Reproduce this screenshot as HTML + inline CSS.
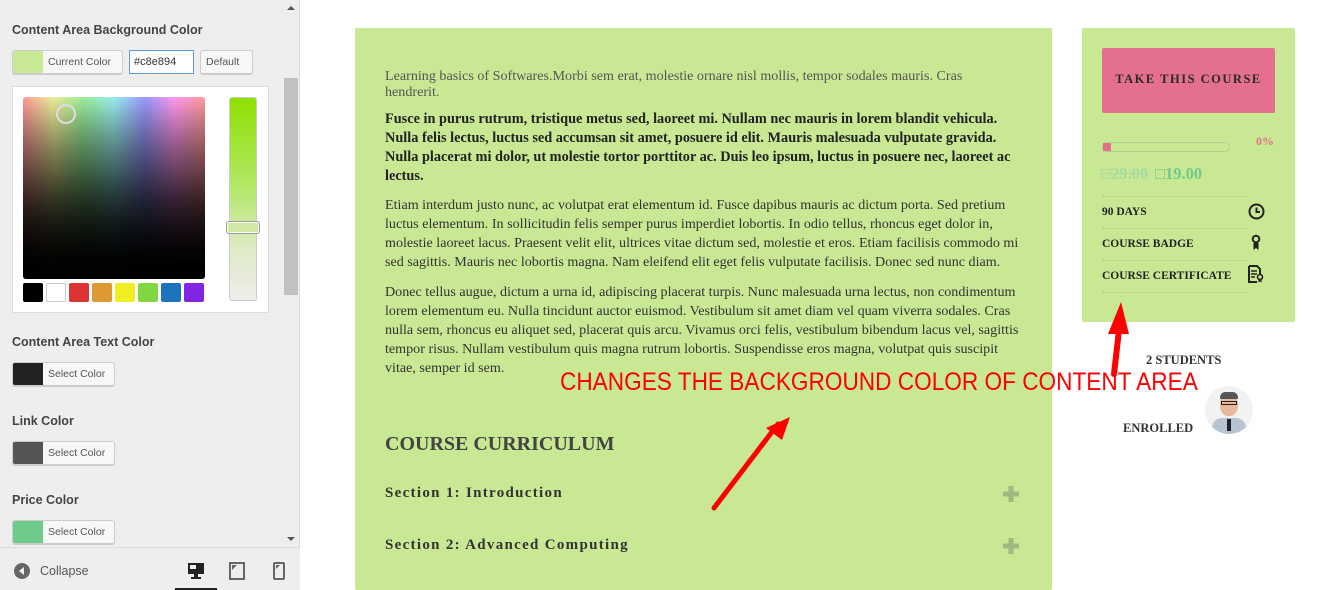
<!DOCTYPE html>
<html><head><meta charset="utf-8"><style>
*{margin:0;padding:0;box-sizing:border-box}
body{width:1344px;height:590px;overflow:hidden;background:#fff;font-family:"Liberation Sans",sans-serif;position:relative}
.side{position:absolute;left:0;top:0;width:300px;height:590px;background:#eeeeee;border-right:1px solid #ddd}
.lbl{position:absolute;left:12px;font-size:12.5px;font-weight:bold;color:#444}
.btn{position:absolute;left:12px;height:24px;border:1px solid #ccc;border-radius:3px;background:#f7f7f7;display:flex;font-size:10.5px;color:#555;overflow:hidden;box-shadow:0 1px 0 #ccc;white-space:nowrap}
.btn .sw{width:30px;height:100%;flex:none}
.btn span{padding:0 5px;line-height:22px}
.abs{position:absolute}
.s{font-family:"Liberation Serif",serif}
.ln{position:absolute;left:385px;white-space:nowrap;font-family:"Liberation Serif",serif;font-size:14.1px;color:#333}
.b{font-weight:bold;color:#222;font-size:14.3px}
.row{position:absolute;left:1102px;width:146px;font-family:"Liberation Serif",serif;font-weight:bold;font-size:11.5px;color:#222;border-top:1px dotted #a9c98a;height:32px;line-height:30px}
</style></head><body>
<div class="side">
  <div class="lbl" style="top:23px">Content Area Background Color</div>
  <div class="btn" style="top:50px;width:111px"><div class="sw" style="background:#c8e894"></div><span>Current Color</span></div>
  <div class="abs" style="left:129px;top:50px;width:65px;height:24px;border:1px solid #5b9dd9;background:#fff;font-size:11px;color:#333;line-height:22px;padding-left:4px">#c8e894</div>
  <div class="btn" style="left:200px;top:50px;width:53px"><span>Default</span></div>
  <div class="abs" style="left:12px;top:86px;width:257px;height:227px;background:#fff;border:1px solid #ddd"></div>
  <div class="abs" style="left:23px;top:97px;width:182px;height:182px;border-radius:3px;background:linear-gradient(to bottom,rgba(0,0,0,0),#000),linear-gradient(to right,#f99,#ee9,#9e9,#9ee,#99f,#f9e,#f99)"></div>
  <div class="abs" style="left:23px;top:97px;width:182px;height:182px;border-radius:3px;background:linear-gradient(to bottom,rgba(128,128,128,0) ,rgba(0,0,0,0.3) 40%,#000)"></div>
  <div class="abs" style="left:56px;top:104px;width:20px;height:20px;border-radius:50%;border:2px solid #ddd"></div>
  <div class="abs" style="left:229px;top:97px;width:28px;height:204px;border-radius:3px;border:1px solid #ccc;background:linear-gradient(#8ee000,#b4e86a 45%,#dfeac8 75%,#eeeeea)"></div>
  <div class="abs" style="left:226px;top:221px;width:34px;height:13px;border:1px solid #999;border-radius:3px;background:#cfe8a4;box-shadow:0 0 0 1px #fff inset"></div>
  <div class="abs" style="left:23px;top:283px;display:flex;gap:3px">
    <div style="width:20px;height:19px;background:#000;border-radius:2px"></div>
    <div style="width:20px;height:19px;background:#fff;border:1px solid #ccc;border-radius:2px"></div>
    <div style="width:20px;height:19px;background:#dd3333;border-radius:2px"></div>
    <div style="width:20px;height:19px;background:#dd9933;border-radius:2px"></div>
    <div style="width:20px;height:19px;background:#eeee22;border-radius:2px"></div>
    <div style="width:20px;height:19px;background:#81d742;border-radius:2px"></div>
    <div style="width:20px;height:19px;background:#1e73be;border-radius:2px"></div>
    <div style="width:20px;height:19px;background:#8224e3;border-radius:2px"></div>
  </div>
  <div class="abs" style="left:284px;top:0;width:15px;height:548px;background:#eee"></div>
  <div class="abs" style="left:284px;top:78px;width:14px;height:217px;background:#c1c1c1"></div>
  <div class="abs" style="left:287px;top:6px;border:4px solid transparent;border-bottom:4px solid #555;border-top:0"></div>
  <div class="abs" style="left:287px;top:537px;border:4px solid transparent;border-top:4px solid #555;border-bottom:0"></div>
  <div class="lbl" style="top:335px">Content Area Text Color</div>
  <div class="btn" style="top:362px;width:103px"><div class="sw" style="background:#222"></div><span>Select Color</span></div>
  <div class="lbl" style="top:414px">Link Color</div>
  <div class="btn" style="top:441px;width:103px"><div class="sw" style="background:#555"></div><span>Select Color</span></div>
  <div class="lbl" style="top:493px">Price Color</div>
  <div class="btn" style="top:520px;width:103px"><div class="sw" style="background:#6fcb8b"></div><span>Select Color</span></div>
  <div class="abs" style="left:0;top:547px;width:300px;height:43px;background:#eee;border-top:1px solid #ddd"></div>
  <div class="abs" style="left:14px;top:563px;width:16px;height:16px;border-radius:50%;background:#666"></div>
  <div class="abs" style="left:19px;top:567px;border:4px solid transparent;border-right:5px solid #eee;border-left:0"></div>
  <div class="abs" style="left:40px;top:564px;font-size:12.5px;color:#555">Collapse</div>
  <svg class="abs" style="left:186px;top:561px" width="20" height="20" viewBox="0 0 20 20"><rect x="2" y="2" width="16" height="11" fill="#222"/><rect x="4" y="4" width="6" height="4" fill="#eee"/><rect x="8" y="13" width="4" height="3" fill="#222"/><rect x="5" y="16" width="10" height="2" fill="#222"/></svg>
  <div class="abs" style="left:175px;top:588px;width:42px;height:2px;background:#222"></div>
  <svg class="abs" style="left:229px;top:562px" width="16" height="18" viewBox="0 0 16 18"><rect x="1" y="1" width="14" height="16" fill="none" stroke="#666" stroke-width="2"/><path d="M3 3h5l-5 5z" fill="#666"/></svg>
  <svg class="abs" style="left:273px;top:562px" width="12" height="18" viewBox="0 0 12 18"><rect x="1" y="1" width="10" height="16" rx="1" fill="none" stroke="#666" stroke-width="2"/><path d="M3 3h4l-4 4z" fill="#666"/></svg>
</div>

<div class="abs" style="left:355px;top:28px;width:697px;height:562px;background:#c8e894;border-radius:2px"></div>
<div class="ln" style="top:68px;color:#555">Learning basics of Softwares.Morbi sem erat, molestie ornare nisl mollis, tempor sodales mauris. Cras</div>
<div class="ln" style="top:84px;color:#555">hendrerit.</div>
<div class="ln b" style="top:111px">Fusce in purus rutrum, tristique metus sed, laoreet mi. Nullam nec mauris in lorem blandit vehicula.</div>
<div class="ln b" style="top:130px">Nulla felis lectus, luctus sed accumsan sit amet, posuere id elit. Mauris malesuada vulputate gravida.</div>
<div class="ln b" style="top:149px">Nulla placerat mi dolor, ut molestie tortor porttitor ac. Duis leo ipsum, luctus in posuere nec, laoreet ac</div>
<div class="ln b" style="top:168px">lectus.</div>
<div class="ln" style="top:197px">Etiam interdum justo nunc, ac volutpat erat elementum id. Fusce dapibus mauris ac dictum porta. Sed pretium</div>
<div class="ln" style="top:216px">luctus elementum. In sollicitudin felis semper purus imperdiet lobortis. In odio tellus, rhoncus eget dolor in,</div>
<div class="ln" style="top:235px">molestie laoreet lacus. Praesent velit elit, ultrices vitae dictum sed, molestie et eros. Etiam facilisis commodo mi</div>
<div class="ln" style="top:254px">sed sagittis. Mauris nec lobortis magna. Nam eleifend elit eget felis vulputate facilisis. Donec sed nunc diam.</div>
<div class="ln" style="top:284px">Donec tellus augue, dictum a urna id, adipiscing placerat turpis. Nunc malesuada urna lectus, non condimentum</div>
<div class="ln" style="top:303px">lorem elementum eu. Nulla tincidunt auctor euismod. Vestibulum sit amet diam vel quam viverra sodales. Cras</div>
<div class="ln" style="top:322px">nulla sem, rhoncus eu aliquet sed, placerat quis arcu. Vivamus orci felis, vestibulum bibendum lacus vel, sagittis</div>
<div class="ln" style="top:341px">tempor risus. Nullam vestibulum quis magna rutrum lobortis. Suspendisse eros magna, volutpat quis suscipit</div>
<div class="ln" style="top:360px">vitae, semper id sem.</div>
<div class="ln" style="top:433px;font-size:20px;font-weight:bold;color:#444">COURSE CURRICULUM</div>
<div class="ln" style="top:485px;font-size:15px;font-weight:bold;letter-spacing:1.3px;color:#333">Section 1: Introduction</div>
<div class="ln" style="top:537px;font-size:15px;font-weight:bold;letter-spacing:1.3px;color:#333">Section 2: Advanced Computing</div>
<svg class="abs" style="left:1001px;top:484px" width="20" height="20"><path d="M10 2v16M2 10h16" stroke="#9fb97f" stroke-width="5"/></svg>
<svg class="abs" style="left:1001px;top:536px" width="20" height="20"><path d="M10 2v16M2 10h16" stroke="#9fb97f" stroke-width="5"/></svg>

<div class="abs" style="left:1082px;top:28px;width:213px;height:294px;background:#c8e894;border-radius:2px"></div>
<div class="abs s" style="left:1102px;top:48px;width:173px;height:65px;background:#e5708e;border-radius:2px;text-align:center;line-height:63px;font-weight:bold;font-size:12.5px;letter-spacing:1.5px;color:#2a2a2a">TAKE THIS COURSE</div>
<div class="abs" style="left:1102px;top:142px;width:128px;height:10px;border:1px solid #b0d090;border-radius:5px"></div>
<div class="abs" style="left:1103px;top:143px;width:8px;height:8px;background:#e5708e"></div>
<div class="abs s" style="left:1256px;top:134px;font-size:12px;font-weight:bold;color:#e5708e">0%</div>
<div class="abs s" style="left:1101px;top:164px;font-size:16.5px;font-weight:bold;color:#a6dba0;text-decoration:line-through">□29.00</div>
<div class="abs s" style="left:1155px;top:164px;font-size:16.5px;font-weight:bold;color:#6fcb8b">□19.00</div>
<div class="row" style="top:196px">90 DAYS</div>
<div class="row" style="top:228px">COURSE BADGE</div>
<div class="row" style="top:260px">COURSE CERTIFICATE</div>
<div class="abs" style="left:1102px;top:292px;width:146px;border-top:1px dotted #a9c98a"></div>
<svg class="abs" style="left:1248px;top:203px" width="17" height="17" viewBox="0 0 17 17"><circle cx="8.5" cy="8.5" r="7" fill="none" stroke="#222" stroke-width="2"/><path d="M8.5 4.5v4.5h3.5" fill="none" stroke="#222" stroke-width="2"/></svg>
<svg class="abs" style="left:1251px;top:234px" width="10" height="17" viewBox="0 0 10 17"><circle cx="5" cy="5" r="3.3" fill="none" stroke="#222" stroke-width="2"/><path d="M2.5 9h5v7l-2.5-2-2.5 2z" fill="#222"/></svg>
<svg class="abs" style="left:1247px;top:265px" width="18" height="18" viewBox="0 0 18 18"><path d="M2 1h8l3 3v6M2 1v16h8" fill="none" stroke="#222" stroke-width="2"/><path d="M4 6h6M4 9h6M4 12h4" stroke="#222" stroke-width="1.4"/><circle cx="13" cy="12" r="2.5" fill="none" stroke="#222" stroke-width="1.6"/><path d="M11.5 14v3.5l1.5-1 1.5 1V14" fill="#222"/></svg>

<div class="abs s" style="left:1146px;top:353px;font-size:12.5px;font-weight:bold;color:#333">2 STUDENTS</div>
<div class="abs s" style="left:1123px;top:421px;font-size:12.5px;font-weight:bold;color:#333">ENROLLED</div>
<div class="abs" style="left:1205px;top:386px;width:48px;height:48px;border-radius:50%;background:#f2f2f2;overflow:hidden">
  <div class="abs" style="left:15px;top:8px;width:18px;height:22px;border-radius:45%;background:#e7b89c"></div>
  <div class="abs" style="left:15px;top:6px;width:18px;height:7px;border-radius:8px 8px 2px 2px;background:#555"></div>
  <div class="abs" style="left:16px;top:15px;width:16px;height:4px;border:1px solid #222"></div>
  <div class="abs" style="left:7px;top:32px;width:34px;height:20px;border-radius:10px 10px 0 0;background:#b8c4d4"></div>
  <div class="abs" style="left:22px;top:33px;width:4px;height:12px;background:#223"></div>
</div>

<div class="abs" style="left:560px;top:368px;font-size:25px;color:#f00;white-space:nowrap;transform:scaleX(0.905);transform-origin:left top">CHANGES THE BACKGROUND COLOR OF CONTENT AREA</div>
<svg class="abs" style="left:0;top:0" width="1344" height="590">
  <path d="M714 508L778 424" stroke="#f00" stroke-width="5" stroke-linecap="round"/>
  <path d="M790 417L766 428L782 440z" fill="#f00"/>
  <path d="M1114 374L1119 330" stroke="#f00" stroke-width="6" stroke-linecap="round"/>
  <path d="M1121 302L1108 334L1129 334z" fill="#f00"/>
</svg>
</body></html>
